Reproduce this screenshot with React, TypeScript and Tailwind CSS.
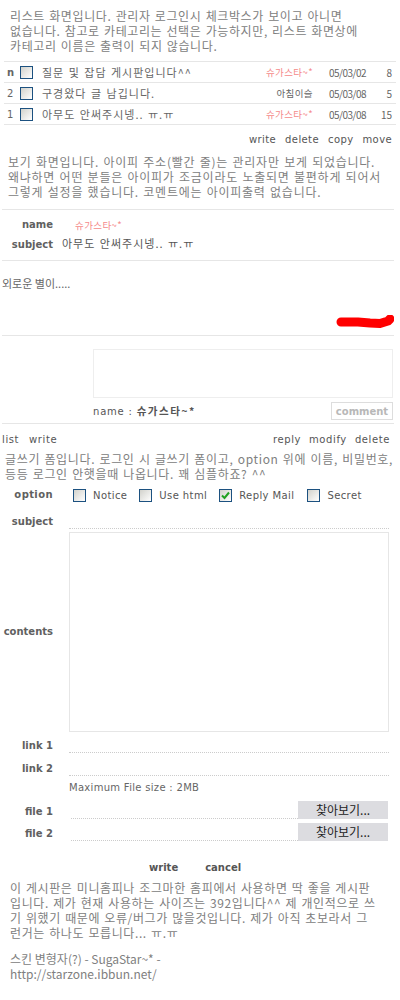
import type { ReactNode } from "react"

const kr = "font-['Noto_Sans_CJK_KR',sans-serif]"
const en = "font-['DejaVu_Sans','Noto_Sans_CJK_KR',sans-serif]"

const rows = [
  { no: "n", bold: true, subject: "질문 및 잡담 게시판입니다^^", name: "슈가스타~*", pink: true, date: "05/03/02", hit: "8" },
  { no: "2", bold: false, subject: "구경왔다 글 남깁니다.", name: "아침이슬", pink: false, date: "05/03/08", hit: "5" },
  { no: "1", bold: false, subject: "아무도 안써주시넹.. ㅠ.ㅠ", name: "슈가스타~*", pink: true, date: "05/03/08", hit: "15" },
]

function Box({ checked = false }: { checked?: boolean }) {
  return (
    <span className="relative block w-[13px] h-[13px] shrink-0 border border-[#1c5180] bg-linear-to-br from-[#d2d2cc] to-white">
      {checked && (
        <svg className="absolute left-[1px] top-[1px]" width="9" height="9" viewBox="0 0 9 9">
          <path d="M1 4.5 L3.5 7 L8 1.5" fill="none" stroke="#21a121" strokeWidth="2" />
        </svg>
      )}
    </span>
  )
}

function Label({ children }: { children: ReactNode }) {
  return (
    <span className={`w-[53px] shrink-0 text-right text-[10px] leading-[14px] font-bold text-[#606060] ${en}`}>
      {children}
    </span>
  )
}

function Hr({ className = "" }: { className?: string }) {
  return <div className={`ml-[2px] w-[392px] border-t border-[#e6e6e6] ${className}`} />
}

export default function App() {
  return (
    <div className={`w-[400px] min-h-[1000px] bg-white text-[#808080] ${kr}`}>
      <p className="px-[10px] pt-[8px] text-[12px] leading-[15px] whitespace-nowrap tracking-[0.6px] [word-spacing:1px]">
        리스트 화면입니다. 관리자 로그인시 체크박스가 보이고 아니면
        <br />
        없습니다. 참고로 카테고리는 선택은 가능하지만, 리스트 화면상에
        <br />
        카테고리 이름은 출력이 되지 않습니다.
      </p>

      <div className="mx-[4px] mt-[8px] border-t border-[#e6e6e6] text-[#666]">
        {rows.map((r) => (
          <div key={r.no} className="flex h-[21px] items-center border-b border-[#e6e6e6]">
            <span className={`w-[16px] pl-[3px] text-[10px] ${en} ${r.bold ? "font-bold" : ""}`}>{r.no}</span>
            <Box />
            <span className="ml-[9px] flex-1 text-[11px] whitespace-nowrap tracking-[1px] [word-spacing:1px]">{r.subject}</span>
            <span className={`text-[9.5px] whitespace-nowrap tracking-[0.4px] ${r.pink ? "text-[#f58a8a]" : "text-[#666]"}`}>{r.name}</span>
            <span className="w-[56px] pl-[16px] text-[10px] tracking-[-0.5px]">{r.date}</span>
            <span className="w-[27px] pr-[4px] text-right text-[10px]">{r.hit}</span>
          </div>
        ))}
      </div>

      <div className={`mt-[7px] flex h-[14px] items-center justify-end gap-[9px] pr-[8px] text-[10px] tracking-[0.4px] text-[#555] ${en}`}>
        <span>write</span>
        <span>delete</span>
        <span>copy</span>
        <span>move</span>
      </div>

      <p className="mt-[8px] px-[8px] text-[12px] leading-[15px] whitespace-nowrap tracking-[0.75px] [word-spacing:1px]">
        보기 화면입니다. 아이피 주소(빨간 줄)는 관리자만 보게 되었습니다.
        <br />
        왜냐하면 어떤 분들은 아이피가 조금이라도 노출되면 불편하게 되어서
        <br />
        그렇게 설정을 했습니다. 코멘트에는 아이피출력 없습니다.
      </p>

      <Hr className="mt-[10px]" />
      <div className="pt-[5px]">
        <div className="flex h-[20px] items-center">
          <Label>name</Label>
          <span className="ml-[22px] text-[9.5px] tracking-[0.4px] text-[#f58a8a]">슈가스타~*</span>
        </div>
        <div className="flex h-[20px] items-center">
          <Label>subject</Label>
          <span className="ml-[9px] -mt-[3px] text-[11px] tracking-[1px] text-[#555] [word-spacing:1px]">아무도 안써주시넹.. ㅠ.ㅠ</span>
        </div>
      </div>
      <Hr className="mt-[5px]" />

      <p className="mt-[14px] pl-[2px] text-[11px] leading-[16px] text-[#666]">외로운 별이.....</p>
      <div className="mt-[24px] flex justify-end pr-[6px]">
        <svg width="58" height="14" viewBox="0 0 58 14">
          <path d="M5 7 L22 7 L34 8 L44 8.5 L52 6 L54 4" fill="none" stroke="#ff0000" strokeWidth="9" strokeLinecap="round" strokeLinejoin="round" />
        </svg>
      </div>
      <Hr className="mt-[6px]" />

      <div className="ml-[93px] mt-[13px] h-[49px] w-[300px] border border-[#eeeeee]" />
      <div className="ml-[93px] mt-[4px] flex h-[18px] w-[300px] items-center justify-between">
        <span className={`text-[10px] tracking-[0.8px] text-[#555] ${en}`}>
          name : <b className={`${kr} text-[10.5px] tracking-[1.5px]`}>슈가스타~*</b>
        </span>
        <span className={`flex h-[18px] w-[62px] items-center justify-center border border-[#dddddd] text-[10px] font-bold text-[#b8b8b8] ${en}`}>
          comment
        </span>
      </div>
      <Hr className="mt-[3px]" />

      <div className={`mt-[7px] flex h-[16px] items-center justify-between pl-[2px] pr-[10px] text-[10px] tracking-[0.6px] text-[#555] ${en}`}>
        <div className="flex gap-[10px]">
          <span>list</span>
          <span>write</span>
        </div>
        <div className="flex gap-[8px]">
          <span>reply</span>
          <span>modify</span>
          <span>delete</span>
        </div>
      </div>

      <p className="mt-[4px] px-[5px] text-[12px] leading-[15px] whitespace-nowrap tracking-[0.65px] [word-spacing:1px]">
        글쓰기 폼입니다. 로그인 시 글쓰기 폼이고, option 위에 이름, 비밀번호,
        <br />
        등등 로그인 안햇을때 나옵니다. 꽤 심플하죠? ^^
      </p>

      <div className={`mt-[4px] flex h-[20px] items-center text-[10px] tracking-[0.4px] text-[#555] ${en}`}>
        <Label>option</Label>
        <span className="ml-[20px]"><Box /></span>
        <span className="ml-[7px]">Notice</span>
        <span className="ml-[12px]"><Box /></span>
        <span className="ml-[7px]">Use html</span>
        <span className="ml-[12px]"><Box checked /></span>
        <span className="ml-[7px]">Reply Mail</span>
        <span className="ml-[13px]"><Box /></span>
        <span className="ml-[7px]">Secret</span>
      </div>

      <div className="flex h-[24px] items-end">
        <Label>subject</Label>
        <div className="ml-[16px] h-[24px] w-[320px] border-b border-dotted border-[#cccccc]" />
      </div>
      <div className="mt-[3px] flex items-center">
        <Label>contents</Label>
        <div className="ml-[16px] h-[200px] w-[320px] border border-[#e6e6e6]" />
      </div>
      <div className="flex h-[21px] items-end">
        <Label>link 1</Label>
        <div className="ml-[16px] h-[21px] w-[320px] border-b border-dotted border-[#cccccc]" />
      </div>
      <div className="flex h-[23px] items-end">
        <Label>link 2</Label>
        <div className="ml-[16px] h-[23px] w-[320px] border-b border-dotted border-[#cccccc]" />
      </div>
      <p className={`mt-[5px] pl-[69px] text-[10px] leading-[14px] tracking-[0.3px] text-[#666] ${en}`}>
        Maximum File size : 2MB
      </p>
      <div className="flex h-[24px] items-end">
        <Label>file 1</Label>
        <div className="ml-[18px] h-[24px] w-[227px] border-b border-dotted border-[#cccccc]" />
        <span className="flex h-[18px] w-[90px] items-center justify-center bg-[#dcdce0] text-[12px] text-[#222]">찾아보기...</span>
      </div>
      <div className="flex h-[22px] items-end">
        <Label>file 2</Label>
        <div className="ml-[18px] h-[22px] w-[227px] border-b border-dotted border-[#cccccc]" />
        <span className="flex h-[18px] w-[90px] items-center justify-center bg-[#dcdce0] text-[12px] text-[#222]">찾아보기...</span>
      </div>

      <div className={`mt-[18px] flex h-[16px] items-center gap-[27px] pl-[149px] text-[10px] font-bold text-[#555] ${en}`}>
        <span>write</span>
        <span>cancel</span>
      </div>

      <p className="mt-[5px] px-[10px] text-[12px] leading-[15px] whitespace-nowrap tracking-[0.6px] [word-spacing:1px]">
        이 게시판은 미니홈피나 조그마한 홈피에서 사용하면 딱 좋을 게시판
        <br />
        입니다. 제가 현재 사용하는 사이즈는 392입니다^^ 제 개인적으로 쓰
        <br />
        기 위했기 때문에 오류/버그가 많을것입니다. 제가 아직 초보라서 그
        <br />
        런거는 하나도 모릅니다... ㅠ.ㅠ
      </p>
      <p className="mt-[11px] px-[10px] text-[12px] leading-[15px] whitespace-nowrap">
        스킨 변형자(?) - SugaStar~* -
        <br />
        http://starzone.ibbun.net/
      </p>
    </div>
  )
}
